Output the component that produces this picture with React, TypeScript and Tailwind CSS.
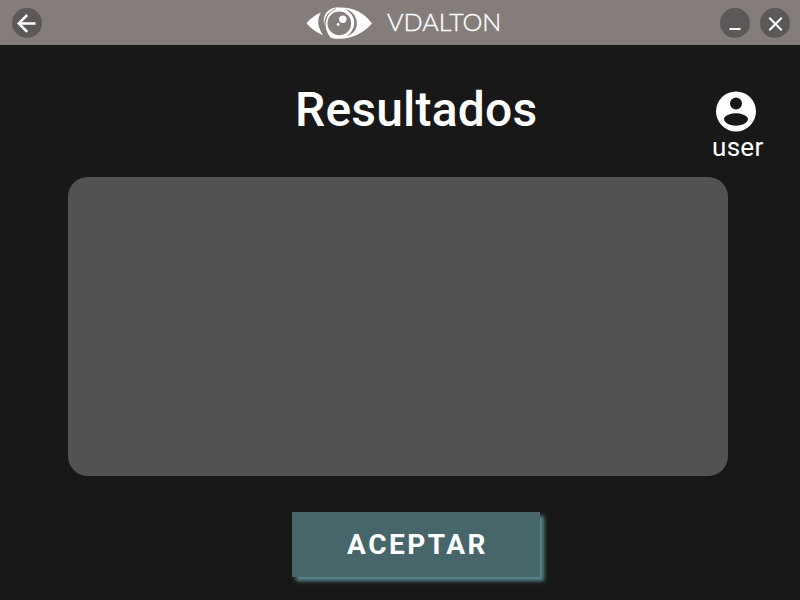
function EyeLogo() {
  return (
    <svg className="h-[45px] w-[80px]" viewBox="0 0 80 45" fill="none">
      <path d="M6.5 23.2 Q13 15.8 21 12.6 Q14.5 22.5 23 35.2 Q12.5 30.5 6.5 23.2Z" fill="white" />
      <path d="M36 7.6 Q59 5.5 72 23.5 Q59 38 40 38.8 Q33 39 30.5 37.5 Q24 29.5 26 20 Q28.5 10.5 36 7.6Z" fill="white" />
      <path d="M24.2 25 Q21.8 13.5 32 8.6 Q34.5 7.5 38 7.6 Q28.5 10.5 25.6 17.5 Q24.4 21 24.2 25Z" fill="white" />
      <path d="M25.1 22 Q27 12 36 8.6" stroke="#847d7c" strokeWidth="0.8" />
      <circle cx="39.3" cy="23.4" r="11.8" fill="#847d7c" />
      <path d="M45 8.8 Q57.5 17 53.2 28 Q51 34 45.5 37 Q60 31.5 56 18.5 Q53.5 11 45 8.8Z" fill="#847d7c" />
      <circle cx="42.8" cy="19.2" r="3.7" fill="white" />
      <circle cx="38.1" cy="24.5" r="1.4" fill="white" />
    </svg>
  );
}

export default function App() {
  return (
    <div className="flex h-[600px] w-[800px] flex-col overflow-hidden bg-[#181818] font-['Roboto',sans-serif] text-white">
      <header className="flex h-[45px] shrink-0 items-center bg-[#847d7c] pr-[10px] pl-3">
        <button aria-label="Volver" className="flex size-[30px] items-center justify-center rounded-full bg-[#5c5857]">
          <svg className="size-[30px]" viewBox="0 0 30 30" fill="none" stroke="white" strokeWidth="2.5">
            <path d="M23.5 15.4H7M15.2 7L6.8 15.4L15.2 23.8" />
          </svg>
        </button>
        <div className="ml-[258px] flex items-center">
          <EyeLogo />
          <span className="ml-[7px] w-[114px] origin-left scale-x-[1.07] font-['Lato',sans-serif] text-[23.5px] leading-[45px] font-light [-webkit-text-stroke:0.35px_white]">VDALTON</span>
        </div>
        <div className="ml-auto flex gap-[10px]">
          <button aria-label="Minimizar" className="size-[30px] rounded-full bg-[#5c5857]">
            <svg viewBox="0 0 30 30" fill="none" stroke="white" strokeWidth="2"><path d="M9.5 21H20.5" /></svg>
          </button>
          <button aria-label="Cerrar" className="size-[30px] rounded-full bg-[#5c5857]">
            <svg viewBox="0 0 30 30" fill="none" stroke="white" strokeWidth="2"><path d="M9.3 9.8L21.7 22.2M21.7 9.8L9.3 22.2" /></svg>
          </button>
        </div>
      </header>
      <div className="flex h-[132px] shrink-0 pl-[295px]">
        <h1 className="mt-[37px] w-[417px] text-[48px] leading-[56px] font-medium tracking-[0.2px]">Resultados</h1>
        <div className="mt-[42px] flex flex-col">
          <svg className="size-[48px]" viewBox="0 0 48 48">
            <path fillRule="evenodd" fill="white" d="M24 4.4a20 20 0 1 0 0 40a20 20 0 1 0 0-40ZM24 10.4a6 6 0 1 1 0 12a6 6 0 1 1 0-12ZM24 38.8c-5 0-12-2.56-12-6.7c.06-3.98 8-5.9 12-5.9c3.98 0 11.94 1.92 12 5.9c0 4.14-7 6.7-12 6.7Z" />
          </svg>
          <span className="-mt-[3px] text-[26px] leading-[30px] tracking-[0.3px]">user</span>
        </div>
      </div>
      <main className="ml-[68px] h-[299px] w-[660px] shrink-0 rounded-[20px] bg-[#525252]" />
      <button className="mt-[36px] ml-[292px] h-[65px] w-[248px] shrink-0 bg-[#46666a] pl-[3px] text-[28px] leading-[65px] font-bold tracking-[2.5px] shadow-[4px_4px_4px_#5b8a90]">ACEPTAR</button>
    </div>
  );
}
